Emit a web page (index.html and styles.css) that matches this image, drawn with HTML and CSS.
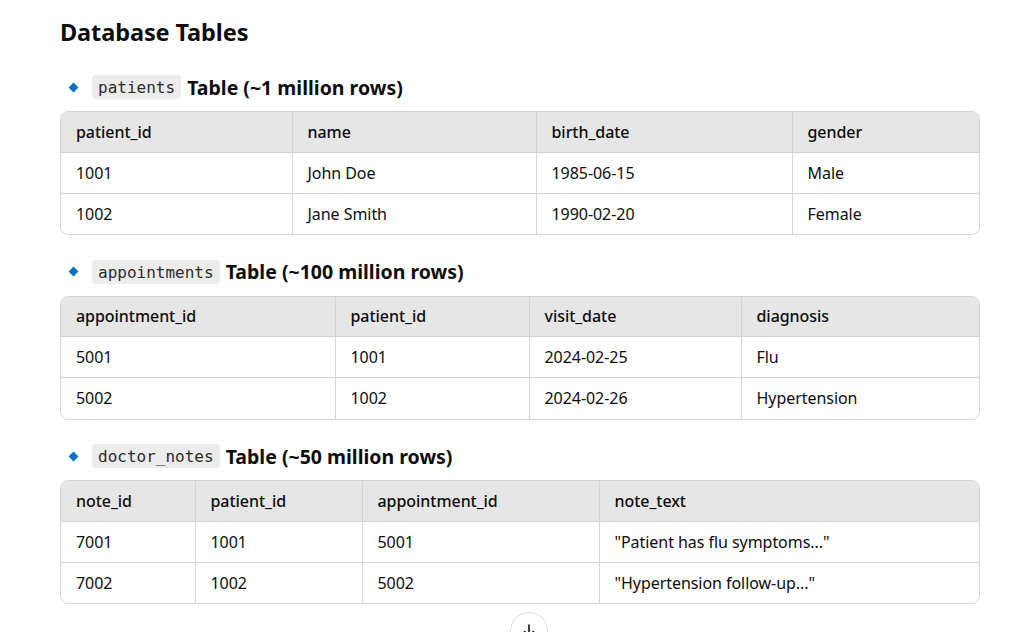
FILE: index.html
```html
<!DOCTYPE html>
<html>
<head>
<meta charset="utf-8">
<link rel="stylesheet" href="styles.css">
</head>
<body>
<main class="page">
  <h1 class="title">Database Tables</h1>

  <section class="block">
    <h3 class="subhead"><span class="bullet"></span><code class="chip">patients</code> Table (~1 million rows)</h3>
    <div class="tablewrap">
      <table>
        <colgroup><col class="c231"><col class="c244"><col class="c256"><col></colgroup>
        <thead><tr><th>patient_id</th><th>name</th><th>birth_date</th><th>gender</th></tr></thead>
        <tbody>
          <tr><td>1001</td><td>John Doe</td><td>1985-06-15</td><td>Male</td></tr>
          <tr><td>1002</td><td>Jane Smith</td><td>1990-02-20</td><td>Female</td></tr>
        </tbody>
      </table>
    </div>
  </section>

  <section class="block">
    <h3 class="subhead"><span class="bullet"></span><code class="chip">appointments</code> Table (~100 million rows)</h3>
    <div class="tablewrap">
      <table>
        <colgroup><col class="c274"><col class="c194"><col class="c212"><col></colgroup>
        <thead><tr><th>appointment_id</th><th>patient_id</th><th>visit_date</th><th>diagnosis</th></tr></thead>
        <tbody>
          <tr><td>5001</td><td>1001</td><td>2024-02-25</td><td>Flu</td></tr>
          <tr><td>5002</td><td>1002</td><td>2024-02-26</td><td>Hypertension</td></tr>
        </tbody>
      </table>
    </div>
  </section>

  <section class="block">
    <h3 class="subhead"><span class="bullet"></span><code class="chip">doctor_notes</code> Table (~50 million rows)</h3>
    <div class="tablewrap">
      <table>
        <colgroup><col class="c134"><col class="c167"><col class="c237"><col></colgroup>
        <thead><tr><th>note_id</th><th>patient_id</th><th>appointment_id</th><th>note_text</th></tr></thead>
        <tbody>
          <tr><td>7001</td><td>1001</td><td>5001</td><td>"Patient has flu symptoms..."</td></tr>
          <tr><td>7002</td><td>1002</td><td>5002</td><td>"Hypertension follow-up..."</td></tr>
        </tbody>
      </table>
    </div>
  </section>
</main>

<button class="scroll-btn" aria-label="Scroll down">
  <svg width="16" height="16" viewBox="0 0 16 16"><path d="M8 2v11M3.5 8.5 8 13l4.5-4.5" fill="none" stroke="#0d0d0d" stroke-width="1.6" stroke-linecap="round" stroke-linejoin="round"/></svg>
</button>
</body>
</html>
```

FILE: styles.css
```css
* { box-sizing: border-box; }
html, body { margin: 0; padding: 0; background: #fff; }
body {
  font-family: "Noto Sans", "Open Sans", sans-serif;
  color: #0d0d0d;
  overflow: hidden;
  height: 632px;
}
.page {
  width: 920px;
  margin-left: 60px;
  padding-top: 16px;
}
.title {
  margin: 0;
  font-size: 23.5px;
  line-height: 32px;
  font-weight: 700;
  letter-spacing: -0.1px;
}
.block { margin-top: 27px; }
.block + .block { margin-top: 24.5px; }
.subhead {
  margin: 0;
  display: flex;
  align-items: center;
  height: 24px;
  font-size: 19.5px;
  font-weight: 700;
  letter-spacing: 0;
  white-space: pre;
}
.bullet {
  width: 7px;
  height: 7px;
  background: #0a6fc7;
  transform: rotate(45deg);
  margin-left: 10px;
  margin-right: 15px;
  flex: none;
}
.chip {
  font-family: "DejaVu Sans Mono", monospace;
  font-weight: 400;
  font-size: 16px;
  background: #ececec;
  border-radius: 4px;
  padding: 2px 6px 0;
  height: 24px;
  line-height: 22px;
  color: #2b2b2b;
  margin-right: 1px;
  letter-spacing: 0;
}
.tablewrap {
  margin-top: 12px;
  border: 1px solid #d4d4d4;
  border-radius: 8px;
  overflow: hidden;
}
table {
  width: 100%;
  border-collapse: collapse;
  table-layout: fixed;
  font-size: 16px;
}
col.c231 { width: 231px; }
col.c244 { width: 244px; }
col.c256 { width: 256px; }
col.c274 { width: 274px; }
col.c194 { width: 194px; }
col.c212 { width: 212px; }
col.c134 { width: 134px; }
col.c167 { width: 167px; }
col.c237 { width: 237px; }
th, td {
  text-align: left;
  height: 41px;
  padding: 0 15px;
  border-left: 1px solid #d4d4d4;
  border-top: 1px solid #d4d4d4;
  white-space: nowrap;
  letter-spacing: -0.05px;
}
th:first-child, td:first-child { border-left: none; }
thead th {
  border-top: none;
  background: #e6e6e6;
  font-weight: 500;
  height: 40px;
}
td { font-weight: 400; }
.scroll-btn {
  position: fixed;
  left: 510px;
  top: 612px;
  width: 38px;
  height: 38px;
  border-radius: 50%;
  border: 1px solid #dcdcdc;
  background: #fff;
  display: flex;
  align-items: center;
  justify-content: center;
  padding: 0;
}
```
